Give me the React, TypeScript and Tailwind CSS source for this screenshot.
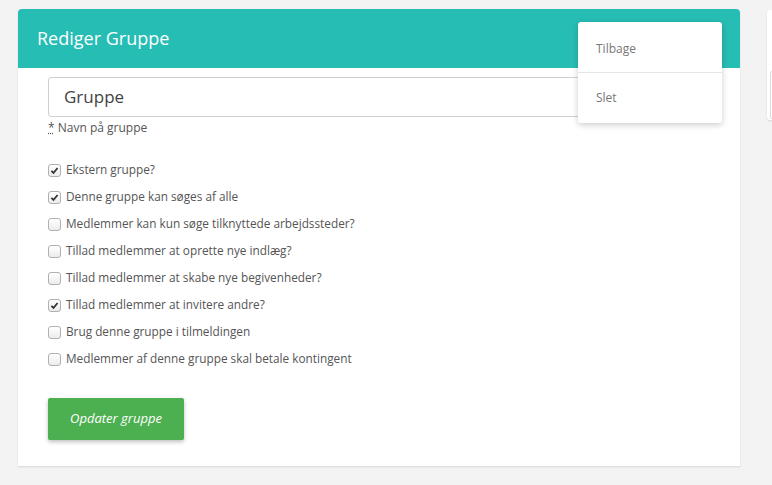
import React from 'react';

const options = [
  { label: 'Ekstern gruppe?', checked: true },
  { label: 'Denne gruppe kan søges af alle', checked: true },
  { label: 'Medlemmer kan kun søge tilknyttede arbejdssteder?', checked: false },
  { label: 'Tillad medlemmer at oprette nye indlæg?', checked: false },
  { label: 'Tillad medlemmer at skabe nye begivenheder?', checked: false },
  { label: 'Tillad medlemmer at invitere andre?', checked: true },
  { label: 'Brug denne gruppe i tilmeldingen', checked: false },
  { label: 'Medlemmer af denne gruppe skal betale kontingent', checked: false },
];

const CheckBox: React.FC<{ checked: boolean }> = ({ checked }) => (
  <span className="flex h-[13px] w-[13px] shrink-0 items-center justify-center rounded-[3px] border border-[#b0b0b0] bg-gradient-to-b from-white to-[#ececec]">
    {checked && (
      <svg width="9" height="9" viewBox="0 0 9 9">
        <path d="M1.4 4.8 L3.5 6.9 L7.6 2" fill="none" stroke="#333" strokeWidth="1.7" />
      </svg>
    )}
  </span>
);

export default function App() {
  return (
    <div
      className="flex h-[485px] w-[772px] gap-[27px] overflow-hidden bg-[#f3f3f3] pl-[18px] pt-[9px]"
      style={{ fontFamily: '"Open Sans", "Noto Sans", sans-serif' }}
    >
      {/* Edit group card */}
      <div className="relative h-[457px] w-[722px] shrink-0 rounded-t-[4px] bg-white shadow-[0_1px_2px_rgba(0,0,0,0.12)]">
        <div className="flex h-[59px] items-center rounded-t-[4px] bg-[#26bdb5] px-[19px]">
          <h1 className="text-[18px] text-white">Rediger Gruppe</h1>
        </div>

        <div className="px-[30px] pt-[9px]">
          <div className="flex h-[40px] items-center rounded-[3px] border border-[#cfcfcf] px-[15px] text-[17px] text-[#444]">
            Gruppe
          </div>
          <p className="mt-[2px] text-[12px] text-[#555]">
            <span className="underline decoration-dotted">*</span> Navn på gruppe
          </p>

          <ul className="mt-[24px] flex flex-col gap-[9px]">
            {options.map((o) => (
              <li key={o.label} className="flex h-[18px] items-center gap-[5px] text-[11.8px] text-[#555]">
                <CheckBox checked={o.checked} />
                <span>{o.label}</span>
              </li>
            ))}
          </ul>

          <button className="mt-[30px] h-[42px] w-[136px] rounded-[2px] bg-[#4caf50] text-[13px] italic text-white shadow-[0_2px_4px_rgba(0,0,0,0.25)]">
            Opdater gruppe
          </button>
        </div>

        {/* Actions menu */}
        <div className="absolute left-[560px] top-[13px] w-[144px] rounded-[3px] bg-white text-[12px] text-[#777] shadow-[0_2px_6px_rgba(0,0,0,0.2)]">
          <div className="flex h-[50px] items-center px-[18px] pt-[4px]">Tilbage</div>
          <div className="border-t border-[#e6e6e6]" />
          <div className="flex h-[50px] items-center px-[18px]">Slet</div>
        </div>
      </div>

      {/* Side card */}
      <div className="mt-[1px] h-[110px] w-[200px] shrink-0 rounded-[3px] bg-white px-[3px] pt-[61px] shadow-[0_1px_2px_rgba(0,0,0,0.12)]">
        <div className="h-[48px] rounded-[2px] border border-[#dcdcdc]" />
      </div>
    </div>
  );
}
